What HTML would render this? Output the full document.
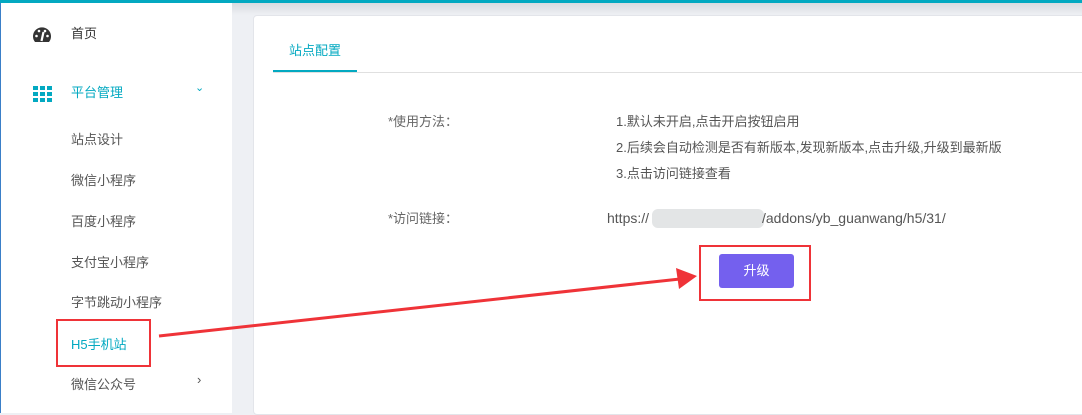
<!DOCTYPE html>
<html><head><meta charset="utf-8"><style>
body{margin:0;width:1082px;height:413px;overflow:hidden;background:#eef0f4;font-family:"Liberation Sans","Noto Sans CJK SC",sans-serif;position:relative}
.top{position:absolute;left:0;top:0;width:1082px;height:3px;background:#03a9c1}
.shadow{position:absolute;left:232px;top:3px;width:850px;height:12px;background:linear-gradient(#d9dbe0,#eef0f4)}
.side{position:absolute;left:0;top:3px;width:232px;height:410px;background:#fff;border-left:1px solid #3a7fc8;box-sizing:border-box}
.it{position:absolute;left:70px;font-size:13px;color:#555}
.card{position:absolute;left:253px;top:15px;width:840px;height:400px;background:#fff;border:1px solid #e3e5ea;border-radius:4px;box-sizing:border-box}
.abs{position:absolute;font-size:13px;color:#666}
</style></head><body>
<div class="top"></div><div class="shadow"></div>
<div class="side">
<svg style="position:absolute;left:31px;top:23px" width="20" height="17" viewBox="0 0 20 17"><path d="M3 16A9 9 0 1 1 17 16Z" fill="#333"/><circle cx="4.5" cy="10" r="1.3" fill="#fff"/><circle cx="7" cy="5" r="1.3" fill="#fff"/><circle cx="13" cy="5" r="1.3" fill="#fff"/><circle cx="15.5" cy="10" r="1.3" fill="#fff"/><path d="M9.5 15L11.5 6" stroke="#fff" stroke-width="2.2"/></svg>
<div class="it" style="top:20px;color:#333">首页</div>
<svg style="position:absolute;left:32px;top:83px" width="19" height="16"><g fill="#03a9c1"><rect x="0" y="0" width="5" height="4"/><rect x="7" y="0" width="5" height="4"/><rect x="14" y="0" width="5" height="4"/><rect x="0" y="6" width="5" height="4"/><rect x="7" y="6" width="5" height="4"/><rect x="14" y="6" width="5" height="4"/><rect x="0" y="12" width="5" height="4"/><rect x="7" y="12" width="5" height="4"/><rect x="14" y="12" width="5" height="4"/></g></svg>
<div class="it" style="top:79px;color:#03a9c1">平台管理</div>
<div class="it" style="left:194px;top:78px;color:#03a9c1;font-size:11px">⌄</div>
<div class="it" style="top:126px">站点设计</div>
<div class="it" style="top:167px">微信小程序</div>
<div class="it" style="top:208px">百度小程序</div>
<div class="it" style="top:249px">支付宝小程序</div>
<div class="it" style="top:289px">字节跳动小程序</div>
<div class="it" style="top:331px;color:#03a9c1">H5手机站</div>
<div class="it" style="top:371px">微信公众号</div>
<div class="it" style="left:196px;top:369px;font-size:13px">›</div>
</div>
<div class="card">
<div class="abs" style="left:35px;top:24px;color:#03a9c1;font-size:13px">站点配置</div>
<div style="position:absolute;left:19px;top:54px;width:84px;height:3px;background:#03a9c1"></div>
<div style="position:absolute;left:19px;top:56px;width:830px;height:1px;background:#e0e0e0"></div>
</div>
<div class="abs" style="left:388px;top:111px">*使用方法：</div>
<div class="abs" style="left:616px;top:111px;color:#555">1.默认未开启,点击开启按钮启用</div>
<div class="abs" style="left:616px;top:137px;color:#555">2.后续会自动检测是否有新版本,发现新版本,点击升级,升级到最新版</div>
<div class="abs" style="left:616px;top:163px;color:#555">3.点击访问链接查看</div>
<div class="abs" style="left:388px;top:208px">*访问链接：</div>
<div class="abs" style="left:607px;top:210px;color:#555;font-size:14px">https://</div>
<div style="position:absolute;left:652px;top:209px;width:112px;height:19px;background:#e3e5e6;border-radius:6px"></div>
<div class="abs" style="left:762px;top:210px;color:#555;font-size:14px">/addons/yb_guanwang/h5/31/</div>
<div style="position:absolute;left:719px;top:254px;width:75px;height:34px;background:#7460ee;border-radius:3px;color:#fff;font-size:13px;text-align:center;line-height:34px">升级</div>
<div style="position:absolute;left:699px;top:245px;width:112px;height:56px;border:2px solid #ef3338;box-sizing:border-box"></div>
<div style="position:absolute;left:56px;top:319px;width:95px;height:48px;border:2px solid #ef3338;box-sizing:border-box"></div>
<svg style="position:absolute;left:0;top:0" width="1082" height="413"><path d="M159 336L680 279" stroke="#ef3338" stroke-width="3"/><path d="M697 276L676 268L679 289Z" fill="#ef3338"/></svg>
</body></html>
